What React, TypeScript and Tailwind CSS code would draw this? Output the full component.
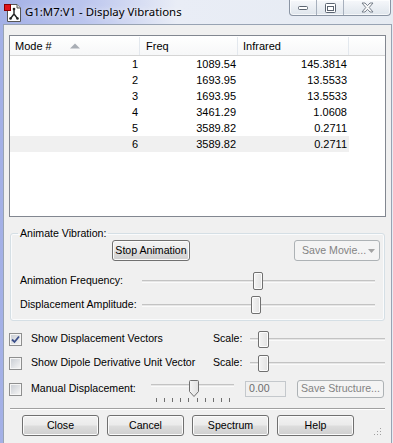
import clsx from 'clsx';

const rows = [
  ['1', '1089.54', '145.3814'],
  ['2', '1693.95', '13.5533'],
  ['3', '1693.95', '13.5533'],
  ['4', '3461.29', '1.0608'],
  ['5', '3589.82', '0.2711'],
  ['6', '3589.82', '0.2711'],
];

function Btn({ label, className, disabled }: { label: string; className?: string; disabled?: boolean }) {
  return (
    <div
      className={clsx(
        'flex h-[21px] items-center justify-center whitespace-nowrap rounded-[3px] border',
        disabled
          ? 'border-[#adb2b5] bg-[#f4f4f4] text-[#838383]'
          : 'border-[#707070] bg-[linear-gradient(#f2f2f2_0%,#ebebeb_48%,#dddddd_52%,#cfcfcf_100%)] text-black shadow-[inset_0_0_0_1px_#fbfbfb]',
        className
      )}
    >
      {label}
    </div>
  );
}

function Thumb({ className }: { className?: string }) {
  return (
    <div
      className={clsx(
        'absolute rounded-[2px] border border-[#707070] bg-[linear-gradient(to_right,#f4f4f4,#e2e2e2)] shadow-[inset_0_0_0_1px_#fcfcfc]',
        className
      )}
    />
  );
}

function Track({ className }: { className?: string }) {
  return <div className={clsx('h-[3px] border-t border-[#c3c3c3] border-b border-b-[#fafafa] bg-[#e6e6e6]', className)} />;
}

function CheckBox({ checked }: { checked?: boolean }) {
  return (
    <div className="flex h-[13px] w-[13px] items-center justify-center border border-[#8e8f8f] bg-[#f4f4f4]">
      <div className="flex h-[11px] w-[11px] items-center justify-center border border-[#f6f6f6] bg-[linear-gradient(135deg,#cbcfd5,#f4f4f4)]">
        {checked && (
          <svg width="9" height="9" viewBox="0 0 9 9">
            <path d="M1 4.5 L3.5 7 L8 1.5" fill="none" stroke="#3b4f8a" strokeWidth="1.8" />
          </svg>
        )}
      </div>
    </div>
  );
}

function AppIcon() {
  return (
    <svg width="19" height="19" viewBox="0 0 19 19" className="ml-[4px]">
      <path d="M3.5 1.5 H13 L16.5 5 V18.5 H3.5 Z" fill="#fff" stroke="#555" />
      <path d="M13 1.5 V5 H16.5" fill="#ddd" stroke="#555" />
      <path d="M10 6 V11 M10 11 L6.5 15.5 M10 11 L13.5 15.5" stroke="#222" strokeWidth="1.4" fill="none" />
      <circle cx="10" cy="6" r="1.3" fill="#222" />
      <circle cx="6.5" cy="15.5" r="1.3" fill="#222" />
      <circle cx="13.5" cy="15.5" r="1.3" fill="#222" />
      <rect x="0.5" y="1.5" width="6" height="6" fill="#e0141a" stroke="#8a0000" />
    </svg>
  );
}

function CaptionButtons() {
  return (
    <div className="ml-auto mr-[2px] flex h-[16px] self-start overflow-hidden rounded-b-[4px] border border-t-0 border-[#8a94a3] bg-[linear-gradient(#f6f8fb,#dfe5ec)] shadow-[inset_0_0_0_1px_rgba(255,255,255,0.7)]">
      <div className="flex w-[27px] items-center justify-center border-r border-[#a7b0bd]">
        <svg width="12" height="6" viewBox="0 0 12 6">
          <rect x="1.5" y="1.5" width="9" height="3" rx="1" fill="#fff" stroke="#5b6471" />
        </svg>
      </div>
      <div className="flex w-[27px] items-center justify-center border-r border-[#a7b0bd]">
        <svg width="11" height="10" viewBox="0 0 11 10">
          <rect x="0.5" y="0.5" width="10" height="9" rx="1" fill="#fff" stroke="#5b6471" />
          <rect x="2.5" y="3.5" width="6" height="4" fill="none" stroke="#5b6471" />
        </svg>
      </div>
      <div className="flex w-[46px] items-center justify-center">
        <svg width="13" height="11" viewBox="0 0 13 11">
          <path
            d="M1 1 H4 L6.5 3.6 L9 1 H12 L8.2 5.5 L12 10 H9 L6.5 7.4 L4 10 H1 L4.8 5.5 Z"
            fill="#fafafa"
            stroke="#6b7480"
            strokeWidth="0.9"
          />
        </svg>
      </div>
    </div>
  );
}

export default function App() {
  return (
    <div className="relative h-[443px] w-[393px] overflow-hidden bg-[linear-gradient(to_right,#a3b0e6_0%,#bcc6ee_22%,#e9edf6_45%,#e6ebf2_100%)] font-['Liberation_Sans',Arial,sans-serif] text-[10.6px] text-black">
      <div className="flex h-[24px] items-center">
        <AppIcon />
        <span className="ml-[2px] font-['Noto_Sans',sans-serif] text-[11.4px] text-black [text-shadow:0_0_6px_#fff]">
          G1:M7:V1 - Display Vibrations
        </span>
        <CaptionButtons />
      </div>

      <div className="ml-[3px] h-[419px] w-[389px] border-l border-r border-t border-[#98a3b3] bg-[#f0f0f0]">
        {/* mode list */}
        <div className="ml-[5px] mt-[10px] h-[182px] w-[377px] border border-[#828790] bg-white text-[11px]">
          <div className="flex h-[20px] border-b border-[#d5d5d5] bg-[linear-gradient(#ffffff,#f6f7f8)] pt-[1px]">
            <div className="flex w-[130px] items-center border-r border-[#e3e8ee] pl-[5px]">
              Mode #
              <svg width="10" height="6" viewBox="0 0 10 6" className="ml-[18px]">
                <path d="M0 5.5 L5 0.5 L10 5.5 Z" fill="#a9aeb5" />
              </svg>
            </div>
            <div className="flex w-[98px] items-center border-r border-[#e3e8ee] pl-[6px]">Freq</div>
            <div className="flex w-[111px] items-center border-r border-[#e3e8ee] pl-[5px]">Infrared</div>
            <div className="flex-1" />
          </div>
          {rows.map((r, i) => (
            <div key={r[0]} className="flex h-[16px] items-center">
              <div className={clsx('flex h-full items-center pt-[1px]', i === 5 && 'bg-[#f0f0f0]')}>
                <div className="w-[130px] pr-[2px] text-right">{r[0]}</div>
                <div className="w-[98px] pr-[2px] text-right">{r[1]}</div>
                <div className="w-[111px] pr-[2px] text-right">{r[2]}</div>
              </div>
            </div>
          ))}
        </div>

        {/* animate group */}
        <fieldset className="ml-[6px] mt-[10px] w-[375px] rounded-[3px] border border-[#d5dfe5] pb-[5px] shadow-[inset_0_0_0_1px_#fafbfc]">
          <legend className="ml-[7px] px-[2px] leading-[13px]">Animate Vibration:</legend>
          <div className="flex">
            <Btn label="Stop Animation" className="ml-[101px] w-[78px]" />
            <div className="ml-auto mr-[4px] flex h-[21px] w-[86px] items-center whitespace-nowrap rounded-[3px] border border-[#adb2b5] bg-[#f4f4f4] text-[#838383]">
              <span className="ml-[7px]">Save Movie...</span>
              <svg width="7" height="4" viewBox="0 0 7 4" className="ml-auto mr-[4px]">
                <path d="M0 0 H7 L3.5 4 Z" fill="#a3a3a3" />
              </svg>
            </div>
          </div>
          <div className="mt-[10px] flex h-[20px] items-center">
            <div className="w-[131px] pl-[9px]">Animation Frequency:</div>
            <div className="relative flex h-[20px] w-[233px] items-center">
              <Track className="w-full" />
              <Thumb className="left-[111px] top-[1px] h-[18px] w-[10px]" />
            </div>
          </div>
          <div className="mt-[4px] flex h-[20px] items-center">
            <div className="w-[131px] pl-[9px]">Displacement Amplitude:</div>
            <div className="relative flex h-[20px] w-[233px] items-center">
              <Track className="w-full" />
              <Thumb className="left-[109px] top-[1px] h-[18px] w-[10px]" />
            </div>
          </div>
        </fieldset>

        {/* display options */}
        <div className="mt-[8px] flex h-[20px] items-center">
          <div className="ml-[5px]">
            <CheckBox checked />
          </div>
          <div className="ml-[9px] w-[182px]">Show Displacement Vectors</div>
          <div className="w-[37px]">Scale:</div>
          <div className="relative flex h-[20px] w-[135px] items-center">
            <Track className="w-full" />
            <Thumb className="left-[8px] top-[2px] h-[17px] w-[11px]" />
          </div>
        </div>
        <div className="mt-[4px] flex h-[20px] items-center">
          <div className="ml-[5px]">
            <CheckBox />
          </div>
          <div className="ml-[9px] w-[182px]">Show Dipole Derivative Unit Vector</div>
          <div className="w-[37px]">Scale:</div>
          <div className="relative flex h-[20px] w-[135px] items-center">
            <Track className="w-full" />
            <Thumb className="left-[8px] top-[2px] h-[17px] w-[11px]" />
          </div>
        </div>
        <div className="mt-[6px] flex items-start">
          <div className="ml-[5px] flex h-[20px] items-center">
            <CheckBox />
          </div>
          <div className="ml-[9px] flex h-[20px] w-[120px] items-center">Manual Displacement:</div>
          <div className="flex w-[83px] flex-col">
            <div className="relative h-[20px]">
              <Track className="mt-[5px] w-full" />
              <svg width="10" height="17" viewBox="0 0 10 17" className="absolute left-[38px] top-[1px]">
                <defs>
                  <linearGradient id="tg" x1="0" x2="1" y1="0" y2="0">
                    <stop offset="0" stopColor="#f4f4f4" />
                    <stop offset="1" stopColor="#e0e0e0" />
                  </linearGradient>
                </defs>
                <path d="M1.5 0.5 H8.5 Q9.5 0.5 9.5 1.5 V11.5 L5 16.5 L0.5 11.5 V1.5 Q0.5 0.5 1.5 0.5 Z" fill="url(#tg)" stroke="#707070" />
              </svg>
            </div>
            <div className="-mt-[1px] ml-[5px] flex h-[4px] w-[74px] justify-between">
              {Array.from({ length: 10 }).map((_, i) => (
                <div key={i} className="h-[4px] w-[1px] bg-[#6f6f6f]" />
              ))}
            </div>
          </div>
          <div className="flex h-[20px] items-center">
            <div className="ml-[11px] flex h-[16px] w-[41px] items-center border border-[#c4c8cc] bg-[#f0f0f0] pl-[3px] text-[#6d6d6d]">
              0.00
            </div>
            <Btn label="Save Structure..." disabled className="ml-[11px] !h-[18px] w-[87px]" />
          </div>
        </div>

        <div className="ml-[6px] mt-[6px] w-[375px] border-t border-[#a0a0a0] border-b border-b-white" />

        <div className="ml-[18px] mt-[5px] flex gap-[8px]">
          <Btn label="Close" className="w-[77px]" />
          <Btn label="Cancel" className="w-[77px]" />
          <Btn label="Spectrum" className="w-[77px]" />
          <Btn label="Help" className="w-[77px]" />
        </div>
      </div>

      <svg width="10" height="10" viewBox="0 0 10 10" className="absolute left-[372px] top-[426px]">
        {[
          [8, 2],
          [8, 5],
          [5, 5],
          [8, 8],
          [5, 8],
          [2, 8],
        ].map(([x, y], i) => (
          <rect key={i} x={x} y={y} width="1" height="1" fill="#a0a0a0" />
        ))}
      </svg>
    </div>
  );
}
